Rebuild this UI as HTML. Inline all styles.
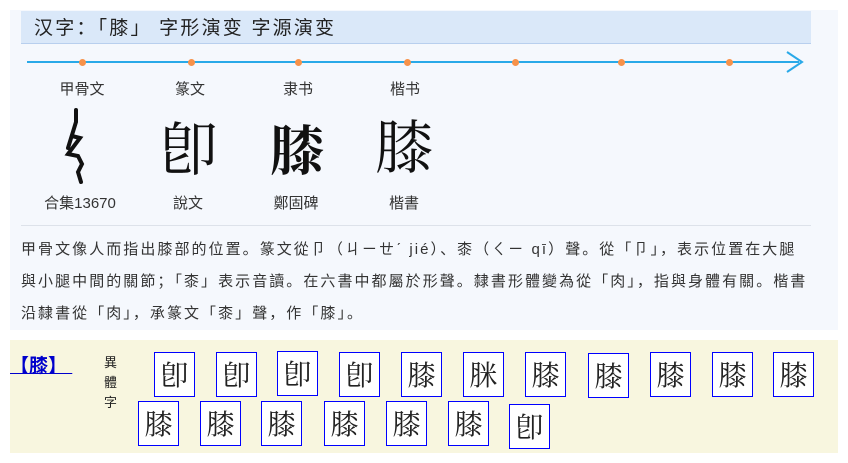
<!DOCTYPE html>
<html><head><meta charset="utf-8"><style>
body{margin:0;width:848px;height:463px;background:#fff;position:relative;overflow:hidden;font-family:"Liberation Sans","Noto Sans CJK SC",sans-serif;}
.a{position:absolute;}
#p{left:10px;top:10px;width:828px;height:320px;background:#f5f8fd;}
#h{left:21px;top:11px;width:790px;height:33px;background:#dae8f9;border-bottom:1px solid #b8cfee;font-size:19px;color:#222;line-height:36px;box-sizing:border-box;padding-left:13px;letter-spacing:2.2px;}
.lab{font-size:15px;color:#333;width:100px;text-align:center;}
.big{font-size:58px;width:100px;text-align:center;color:#111;font-family:"Noto Serif CJK SC","Noto Sans CJK SC",serif;line-height:60px;}
.dot{width:7px;height:7px;background:#f7924a;border-radius:50%;top:59px;}
#t{left:21px;top:234px;width:820px;font-size:15px;line-height:32px;color:#333;letter-spacing:2.05px;white-space:nowrap;}
#b{left:10px;top:340px;width:828px;height:113px;background:#f8f6df;}
.v{width:39px;height:43px;border:1px solid #00f;background:#fff;font-size:28px;line-height:43px;text-align:center;font-family:"Noto Serif CJK TC","Noto Serif CJK SC",serif;color:#222;}
</style></head><body>
<div class="a" id="p"></div>
<div class="a" id="h">汉字：「膝」 字形演变 字源演变</div>
<div class="a" style="left:27px;top:61px;width:772px;height:2px;background:#29a9e8"></div>
<svg class="a" style="left:784px;top:50px" width="22" height="24"><path d="M3 2 L18 12 L3 22" stroke="#29a9e8" stroke-width="2" fill="none"/></svg>
<div class="a dot" style="left:79px"></div><div class="a dot" style="left:188px"></div><div class="a dot" style="left:295px"></div><div class="a dot" style="left:404px"></div><div class="a dot" style="left:512px"></div><div class="a dot" style="left:618px"></div><div class="a dot" style="left:726px"></div>
<div class="a lab" style="left:32px;top:78px">甲骨文</div>
<div class="a lab" style="left:140px;top:78px">篆文</div>
<div class="a lab" style="left:248px;top:78px">隶书</div>
<div class="a lab" style="left:355px;top:78px">楷书</div>
<svg class="a" style="left:60px;top:108px" width="30" height="76"><path d="M16 2 L16 14 L8 40 M12 28 L20 30 L8 46 L18 48 L22 56 L18 64 L21 74" stroke="#111" stroke-width="4" fill="none" stroke-linecap="round"/></svg>
<div class="a big" style="left:139px;top:115px">&#x537D;</div>
<div class="a big" style="left:247px;top:118px;font-weight:bold;font-size:54px">膝</div>
<div class="a big" style="left:354px;top:113px">膝</div>
<div class="a lab" style="left:30px;top:192px">合集13670</div>
<div class="a lab" style="left:138px;top:192px">說文</div>
<div class="a lab" style="left:246px;top:192px">鄭固碑</div>
<div class="a lab" style="left:354px;top:192px">楷書</div>
<div class="a" style="left:21px;top:225px;width:790px;height:1px;background:#dde2ea"></div>
<div class="a" id="t">甲骨文像人而指出膝部的位置。篆文從卩（ㄐㄧㄝˊ jié）、桼（ㄑㄧ qī）聲。從「卩」，表示位置在大腿<br>與小腿中間的關節；「桼」表示音讀。在六書中都屬於形聲。隸書形體變為從「肉」，指與身體有關。楷書<br>沿隸書從「肉」，承篆文「桼」聲，作「膝」。</div>
<div class="a" id="b"></div>
<div class="a" style="left:10px;top:351px;font-size:19px;font-weight:bold;color:#00c;text-decoration:underline;white-space:pre">【膝】 </div>
<div class="a" style="left:104px;top:353px;font-size:13px;line-height:20px;width:14px;color:#222">異<br>體<br>字</div>
<div class="a v" style="left:154px;top:352px">&#x537D;</div>
<div class="a v" style="left:216px;top:352px">&#x537D;</div>
<div class="a v" style="left:277px;top:351px">&#x537D;</div>
<div class="a v" style="left:339px;top:352px">&#x537D;</div>
<div class="a v" style="left:401px;top:352px">膝</div>
<div class="a v" style="left:463px;top:352px">脒</div>
<div class="a v" style="left:525px;top:352px">膝</div>
<div class="a v" style="left:588px;top:353px">膝</div>
<div class="a v" style="left:650px;top:352px">膝</div>
<div class="a v" style="left:712px;top:352px">膝</div>
<div class="a v" style="left:773px;top:352px">膝</div>
<div class="a v" style="left:138px;top:401px">膝</div>
<div class="a v" style="left:200px;top:401px">膝</div>
<div class="a v" style="left:261px;top:401px">膝</div>
<div class="a v" style="left:324px;top:401px">膝</div>
<div class="a v" style="left:386px;top:401px">膝</div>
<div class="a v" style="left:448px;top:401px">膝</div>
<div class="a v" style="left:509px;top:404px">&#x537D;</div>
</body></html>
